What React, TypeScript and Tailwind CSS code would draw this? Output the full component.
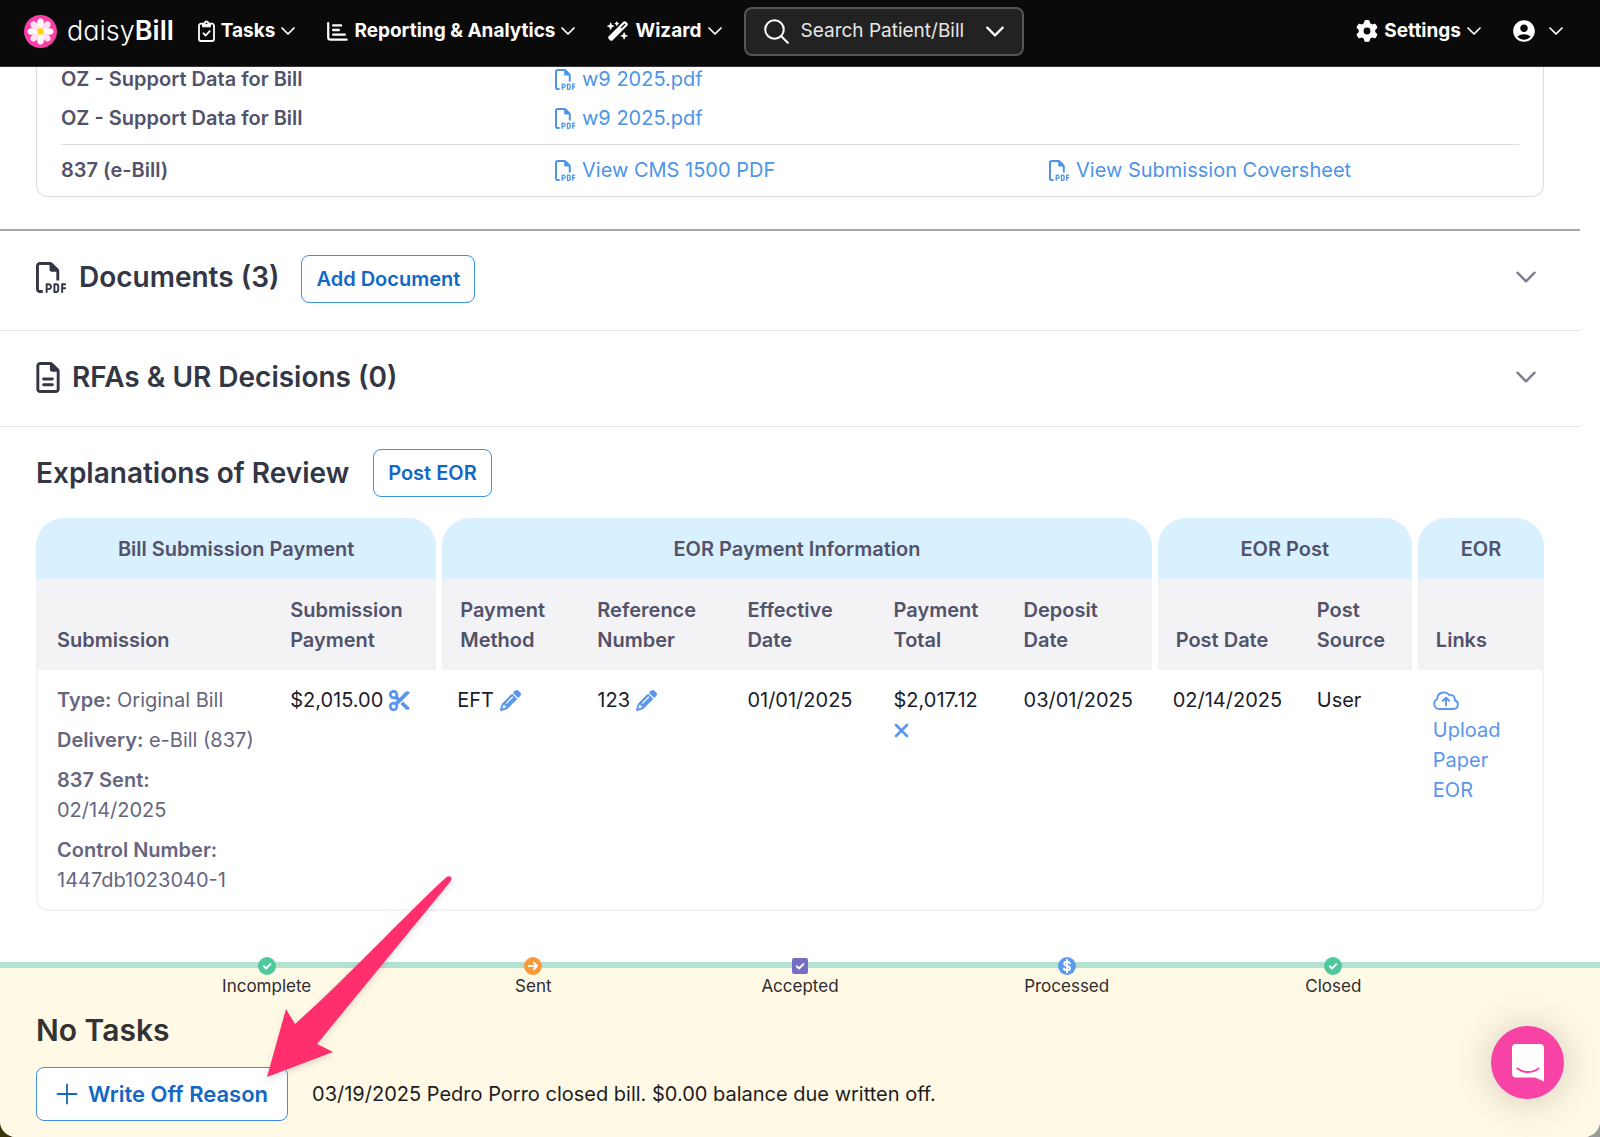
import { useState } from "react";
import type { ReactNode } from "react";
import {
  FaGear,
  FaPencil,
  FaRegFileLines,
  FaRegFilePdf,
  FaScissors,
  FaWandMagicSparkles,
} from "react-icons/fa6";
import { MdAccountCircle } from "react-icons/md";

type Step = {
  label: string;
  icon: ReactNode;
};

type HeadCell = {
  label: string;
  first?: boolean;
};

const COLUMNS = [
  "w-[236px]",
  "w-[164px]",
  "w-[143px]",
  "w-[150px]",
  "w-[146px]",
  "w-[130px]",
  "w-[146px]",
  "w-[147px]",
  "w-[113px]",
  "w-[132px]",
];

const GROUPS = [
  { label: "Bill Submission Payment", span: 2 },
  { label: "EOR Payment Information", span: 5 },
  { label: "EOR Post", span: 2 },
  { label: "EOR", span: 1 },
];

const HEAD_CELLS: HeadCell[] = [
  { label: "Submission" },
  { label: "Submission Payment" },
  { label: "Payment Method", first: true },
  { label: "Reference Number" },
  { label: "Effective Date" },
  { label: "Payment Total" },
  { label: "Deposit Date" },
  { label: "Post Date", first: true },
  { label: "Post Source" },
  { label: "Links", first: true },
];

const CHECK = "M5.800 9.300l2.300 2.200 4.300-4.400";
const ARROW = "M4.800 9h8M9.700 5.700L13 9l-3.300 3.300";
const DOLLAR =
  "M11.900 6.300C11.300 5.200 10.200 4.800 9 4.800c-1.700 0-2.800.8-2.800 2 0 2.900 5.900 1.500 5.900 4.500 0 1.300-1.300 2-3.100 2-1.400 0-2.500-.5-3.100-1.600M9 2.800v12.400";

const STEPS: Step[] = [
  { label: "Incomplete", icon: <StepIcon color="#4fc99c" path={CHECK} /> },
  { label: "Sent", icon: <StepIcon color="#f79a3c" path={ARROW} /> },
  { label: "Accepted", icon: <StepIcon color="#746fc4" path={CHECK} square /> },
  { label: "Processed", icon: <StepIcon color="#5f99ec" path={DOLLAR} /> },
  { label: "Closed", icon: <StepIcon color="#4fc99c" path={CHECK} /> },
];

function Chevron({ className }: { className: string }) {
  return (
    <svg className={className} viewBox="0 0 14 8" fill="none" stroke="currentColor" aria-hidden="true">
      <path d="M1 1l6 6 6-6" strokeWidth={1.700} strokeLinecap="round" strokeLinejoin="round" />
    </svg>
  );
}

function StepIcon({ color, path, square }: { color: string; path: string; square?: boolean }) {
  return (
    <svg className="size-[18px]" viewBox="0 0 18 18" fill="none" aria-hidden="true">
      {square
        ? <rect x="1" y="1" width="16" height="16" rx="2" fill={color} />
        : <circle cx="9" cy="9" r="9" fill={color} />
      }
      <path d={path} stroke="#fff" strokeWidth={1.900} strokeLinecap="round" strokeLinejoin="round" />
    </svg>
  );
}

function DaisyLogo() {
  return (
    <svg className="size-[33px]" viewBox="0 0 34 34" aria-hidden="true">
      <circle cx="17" cy="17" r="17" fill="#f740a4" />
      {[0, 45, 90, 135, 180, 225, 270, 315].map((angle) => (
        <path
          key={angle}
          d="M17 17C13.500 12 12.800 7 14.600 4.600c1.200-1.400 3.600-1.400 4.800 0C21.200 7 20.500 12 17 17z"
          fill={angle % 90 === 0 ? "#ffffff" : "#fde3f2"}
          transform={`rotate(${angle} 17 17)`}
        />
      ))}
      <circle cx="17" cy="17" r="3.300" fill="#ffd400" />
    </svg>
  );
}

function ClipboardIcon() {
  return (
    <svg className="w-[17px] h-[22px]" viewBox="0 0 17 22" fill="none" stroke="currentColor" aria-hidden="true">
      <path d="M5 3.700H3a2 2 0 0 0-2 2V19a2 2 0 0 0 2 2h11a2 2 0 0 0 2-2V5.700a2 2 0 0 0-2-2h-2" strokeWidth={1.800} />
      <path d="M4.500 3.200h1.800a2.200 2.200 0 0 1 4.400 0h1.800v3.600h-8z" fill="currentColor" strokeWidth={1} strokeLinejoin="round" />
      <circle cx="8.500" cy="3.300" r="0.900" fill="#0a0a0a" stroke="none" />
      <path d="M5.500 13.300l2.200 2.200 4-4.400" strokeWidth={1.800} strokeLinecap="round" strokeLinejoin="round" />
    </svg>
  );
}

function ChartIcon() {
  return (
    <svg className="w-[21px] h-[19px]" viewBox="0 0 21 19" fill="none" stroke="currentColor" strokeLinecap="round" aria-hidden="true">
      <path d="M1.200 1.200v14a2.500 2.500 0 0 0 2.500 2.500h16" strokeWidth={2.200} />
      <path d="M6.200 3.400h7.800M6.200 8h5.600M6.200 12.600h11.600" strokeWidth={2.400} />
    </svg>
  );
}

function SearchIcon() {
  return (
    <svg className="size-[25px] shrink-0" viewBox="0 0 25 25" fill="none" stroke="currentColor" aria-hidden="true">
      <circle cx="10.500" cy="10.500" r="9.300" strokeWidth={2} />
      <path d="M17.300 17.300l6.500 6.500" strokeWidth={2} strokeLinecap="round" />
    </svg>
  );
}

function CloudUploadIcon() {
  return (
    <svg className="w-[26px] h-[19px]" viewBox="0 0 26 19" fill="none" stroke="currentColor" strokeLinecap="round" strokeLinejoin="round" aria-hidden="true">
      <path d="M6.300 18A5.300 5.300 0 0 1 4.100 8 6.800 6.800 0 0 1 16.300 4.100 4.300 4.300 0 0 1 21.700 9.200 4.500 4.500 0 0 1 20.500 18z" strokeWidth={1.900} />
      <path d="M13 14.500V7M9.800 9.800L13 6.700l3.200 3.100" strokeWidth={1.900} />
    </svg>
  );
}

function NavMenu({ icon, label }: { icon: ReactNode; label: string }) {
  return (
    <button className="flex items-center gap-1.5 font-bold whitespace-nowrap">
      {icon}
      {label}
      <Chevron className="w-[14px] h-2 shrink-0" />
    </button>
  );
}

function Header() {
  const [query, setQuery] = useState("");

  return (
    <header className="flex items-center h-[67px] pl-6 pr-[37px] pb-1 bg-[#0a0a0a] border-b border-[#3a3338] text-white text-[19px]">
      <a href="#home" className="flex items-center gap-2.5 text-[27px] leading-8">
        <DaisyLogo />
        <span>
          <span className="font-light [font-feature-settings:'cv11']">daisy</span>
          <span className="font-semibold">Bill</span>
        </span>
      </a>

      <nav className="flex items-center gap-8 ml-6">
        <NavMenu icon={<ClipboardIcon />} label="Tasks" />
        <NavMenu icon={<ChartIcon />} label="Reporting & Analytics" />
        <NavMenu icon={<FaWandMagicSparkles className="size-[22px]" />} label="Wizard" />
      </nav>

      {/* Patient / bill search */}
      <div className="flex items-center w-[280px] h-[49px] ml-[22px] pl-[18px] pr-[18px] gap-3 rounded-lg border-2 border-[#555] bg-[#222]">
        <SearchIcon />
        <input
          type="text"
          value={query}
          onChange={(e) => setQuery(e.target.value)}
          placeholder="Search Patient/Bill"
          aria-label="Search Patient/Bill"
          className="flex-1 min-w-0 bg-transparent outline-none placeholder:text-[#e6e6e6]"
        />
        <Chevron className="w-[18px] h-[11px] shrink-0" />
      </div>

      <div className="flex items-center gap-[30px] ml-auto">
        <NavMenu icon={<FaGear className="size-[22px]" />} label="Settings" />
        <button className="flex items-center gap-3" aria-label="Account">
          <MdAccountCircle className="size-[26px]" />
          <Chevron className="w-[14px] h-2" />
        </button>
      </div>
    </header>
  );
}

function PdfLink({ label }: { label: string }) {
  return (
    <a href="#pdf" className="flex items-center gap-1.5 text-[#4c94e8]">
      <FaRegFilePdf className="size-[21px]" />
      {label}
    </a>
  );
}

function OutlineButton({ label }: { label: string }) {
  return (
    <button className="h-12 px-3.5 rounded-lg border border-[#3d8fe8] bg-white text-[#1268c4] font-semibold whitespace-nowrap">
      {label}
    </button>
  );
}

function SupportFiles() {
  return (
    <section className="mx-9 mb-8 px-6 pb-3.5 border border-t-0 border-[#dcdce4] rounded-b-xl leading-6">
      <div className="flex flex-col gap-[15px] pb-3.5">
        {[1, 2].map((row) => (
          <div key={row} className="grid grid-cols-3 gap-6">
            <span className="font-semibold text-[#52526a]">OZ - Support Data for Bill</span>
            <PdfLink label="w9 2025.pdf" />
          </div>
        ))}
      </div>
      <div className="grid grid-cols-3 gap-6 pt-[13px] border-t border-[#dcdce4]">
        <span className="font-semibold text-[#52526a]">837 (e-Bill)</span>
        <PdfLink label="View CMS 1500 PDF" />
        <PdfLink label="View Submission Coversheet" />
      </div>
    </section>
  );
}

function EorTable() {
  const cell = "pt-[15px] pr-3 pb-3.5 border-b-2 border-[#f3f3f6]";

  return (
    <table className="w-full mt-[21px] table-fixed border-separate border-spacing-0 text-left leading-[30px]">
      <colgroup>
        {COLUMNS.map((width, i) => (
          <col key={i} className={width} />
        ))}
      </colgroup>
      <thead className="text-[#52526a]">
        <tr>
          {GROUPS.map((group, i) => (
            <th key={group.label} colSpan={group.span} className={i === 0 ? "p-0" : "p-0 pl-1.5"}>
              <div className="h-[61px] flex items-center justify-center rounded-t-[28px] bg-[#d9f0ff] font-semibold">
                {group.label}
              </div>
            </th>
          ))}
        </tr>
        <tr>
          {HEAD_CELLS.map((head, i) => (
            <th
              key={head.label}
              className={[
                "h-[91px] py-[15px] pr-4 align-bottom font-semibold bg-[#f3f3f6]",
                i === 0 ? "pl-[21px]" : "pl-[18px]",
                head.first ? "border-l-[6px] border-white" : "",
              ].join(" ")}
            >
              {head.label}
            </th>
          ))}
        </tr>
      </thead>
      <tbody>
        <tr className="align-top text-[#1c1c2b]">
          <td className={`${cell} pl-[19px] border-l-2 rounded-bl-xl`}>
            <div className="flex flex-col gap-2.5 text-[#66667e]">
              <p><b className="font-semibold">Type:</b> Original Bill</p>
              <p><b className="font-semibold">Delivery:</b> e-Bill (837)</p>
              <p><b className="font-semibold">837 Sent:</b><br />02/14/2025</p>
              <p><b className="font-semibold">Control Number:</b><br />1447db1023040-1</p>
            </div>
          </td>
          <td className={`${cell} pl-[18px]`}>
            <div className="flex items-center gap-1.5">
              $2,015.00
              <button aria-label="Split payment"><FaScissors className="size-[21px] text-[#5a96ee]" /></button>
            </div>
          </td>
          <td className={`${cell} pl-[21px]`}>
            <div className="flex items-center gap-1.5">
              EFT
              <button aria-label="Edit payment method"><FaPencil className="size-[21px] text-[#5a96ee]" /></button>
            </div>
          </td>
          <td className={`${cell} pl-[18px]`}>
            <div className="flex items-center gap-1.5">
              123
              <button aria-label="Edit reference number"><FaPencil className="size-[21px] text-[#5a96ee]" /></button>
            </div>
          </td>
          <td className={`${cell} pl-[18px]`}>01/01/2025</td>
          <td className={`${cell} pl-[18px]`}>
            $2,017.12
            <button aria-label="Remove payment" className="flex items-center h-[30px] text-[#5a96ee]">
              <svg className="size-[15px]" viewBox="0 0 15 15" fill="none" stroke="currentColor">
                <path d="M2 2l11 11M13 2L2 13" strokeWidth={2.600} strokeLinecap="round" />
              </svg>
            </button>
          </td>
          <td className={`${cell} pl-[18px]`}>03/01/2025</td>
          <td className={`${cell} pl-[21px]`}>02/14/2025</td>
          <td className={`${cell} pl-[18px]`}>User</td>
          <td className={`${cell} pl-[21px] border-r-2 rounded-br-xl`}>
            <a href="#upload" className="block mr-6 text-[#5a96ee]">
              <span className="flex items-center h-[30px]"><CloudUploadIcon /></span>
              Upload Paper EOR
            </a>
          </td>
        </tr>
      </tbody>
    </table>
  );
}

function StatusFooter() {
  return (
    <footer className="mt-auto pb-4 bg-[#fff9e5] border-t-[6px] border-[#b4e2d2]">
      {/* Bill progress */}
      <ol className="flex justify-around px-[8.333%] -mt-[11px] text-[17px] leading-5 text-[#2c2c30]">
        {STEPS.map((step) => (
          <li key={step.label} className="flex-1 flex flex-col items-center gap-px">
            {step.icon}
            {step.label}
          </li>
        ))}
      </ol>

      <h2 className="mt-4 ml-9 text-[30px] leading-9 font-semibold text-[#333336]">No Tasks</h2>
      <div className="flex items-center gap-6 mt-[19px] ml-9 text-[#1c1c22]">
        <button className="flex items-center gap-2.5 h-[54px] px-[19px] rounded-lg border border-[#3d8fe8] bg-white text-[22px] font-semibold text-[#1268c4] whitespace-nowrap">
          <svg className="size-[22px]" viewBox="0 0 22 22" stroke="currentColor" aria-hidden="true">
            <path d="M11 1.500v19M1.500 11h19" strokeWidth={1.800} strokeLinecap="round" />
          </svg>
          Write Off Reason
        </button>
        <p>03/19/2025 Pedro Porro closed bill. $0.00 balance due written off.</p>
      </div>
    </footer>
  );
}

export default function App() {
  return (
    <div className="bg-linear-to-r from-[#3b3208] to-[#9a9a9a] font-['Inter',sans-serif] text-[20px]">
      <div className="relative flex flex-col min-h-screen overflow-hidden rounded-b-2xl bg-white">
        <Header />

        <main className="mr-5">
          <SupportFiles />

          <section className="flex items-start pt-6 pb-[27px] px-9 border-t-2 border-[#a5a6b5] text-[#333645]">
            <h2 className="flex items-center gap-3 h-11 text-[28px] font-semibold">
              <FaRegFilePdf className="size-[31px]" />
              Documents (3)
            </h2>
            <div className="ml-[22px]"><OutlineButton label="Add Document" /></div>
            <button className="ml-auto mr-2 h-11 text-[#7b7f92]" aria-label="Expand documents">
              <Chevron className="w-5 h-3" />
            </button>
          </section>

          <section className="flex items-start pt-6 pb-[27px] px-9 border-t border-[#e4e4e8] text-[#333645]">
            <h2 className="flex items-center gap-3 h-11 text-[28px] font-semibold">
              <FaRegFileLines className="w-6 h-[31px]" />
              RFAs &amp; UR Decisions (0)
            </h2>
            <button className="ml-auto mr-2 h-11 text-[#7b7f92]" aria-label="Expand RFAs and UR decisions">
              <Chevron className="w-5 h-3" />
            </button>
          </section>

          <section className="pt-[22px] px-9 border-t border-[#e4e4e8]">
            <div className="flex items-center gap-6 text-[#333645]">
              <h2 className="text-[28px] font-semibold">Explanations of Review</h2>
              <OutlineButton label="Post EOR" />
            </div>
            <EorTable />
          </section>
        </main>

        <StatusFooter />

        {/* Pointer to the write off button */}
        <svg className="absolute left-[256px] bottom-[50px] w-[210px] h-[220px] drop-shadow-md pointer-events-none" viewBox="256 867 210 220" aria-hidden="true">
          <path d="M267 1077L286 1009l9 15C350 975 400 920 446 877.500c4-3 7 0 4.500 4L317 1044l16 8z" fill="#ff2f6d" />
        </svg>

        {/* Chat launcher */}
        <button
          className="absolute right-9 bottom-[38px] flex items-center justify-center size-[73px] rounded-full bg-[#f843a6] shadow-[0_2px_40px_rgba(0,0,0,0.2)]"
          aria-label="Open chat"
        >
          <svg className="w-8 h-[38px]" viewBox="0 0 32 38" aria-hidden="true">
            <path d="M4 0h24a4 4 0 0 1 4 4v33.500L23 33.500H4a4 4 0 0 1-4-4V4a4 4 0 0 1 4-4z" fill="#fff" />
            <path d="M5.500 24.500c6 4.800 15 4.800 21 0" fill="none" stroke="#f843a6" strokeWidth={2} strokeLinecap="round" />
          </svg>
        </button>
      </div>
    </div>
  );
}
